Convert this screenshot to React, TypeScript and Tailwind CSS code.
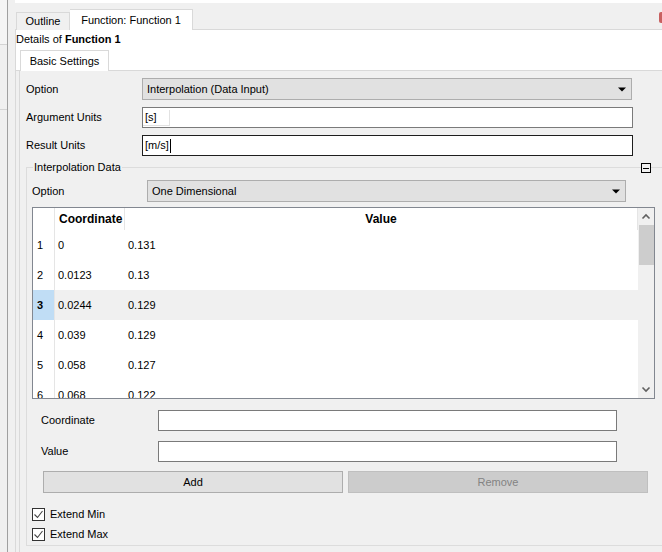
import React from "react";

const rows = [
  ["1", "0", "0.131"],
  ["2", "0.0123", "0.13"],
  ["3", "0.0244", "0.129"],
  ["4", "0.039", "0.129"],
  ["5", "0.058", "0.127"],
  ["6", "0.068", "0.122"],
];

function Caret() {
  return (
    <svg width="8" height="5" viewBox="0 0 8 5" className="shrink-0">
      <path d="M0 0.5h8L4 4.5z" fill="#000" />
    </svg>
  );
}

function Select({ value, className }: { value: string; className: string }) {
  return (
    <div
      className={`flex h-[22px] items-center justify-between border border-[#adadad] bg-[#e1e1e1] pl-[4px] pr-[5px] ${className}`}
    >
      <span>{value}</span>
      <Caret />
    </div>
  );
}

function Check({ label }: { label: string }) {
  return (
    <div className="flex h-[20px] items-center">
      <span className="flex h-[13px] w-[13px] items-center justify-center border border-[#333] bg-white">
        <svg width="11" height="11" viewBox="0 0 11 11">
          <path d="M1.5 5.5l3 3 5-6.5" fill="none" stroke="#444" strokeWidth="1.1" />
        </svg>
      </span>
      <span className="ml-[5px]">{label}</span>
    </div>
  );
}

export default function App() {
  return (
    <div
      className="relative flex h-[552px] w-[662px] overflow-hidden bg-[#f0f0f0] text-[11px] text-black"
      style={{ fontFamily: "'Liberation Sans', Arial, sans-serif" }}
    >
      {/* left docked strip */}
      <div className="flex w-[7px] flex-col">
        <div className="h-[45px] border-b border-[#d4d4d4] bg-[#f5f5f5]" />
        <div className="h-[65px] border-b border-[#d4d4d4]" />
      </div>
      <div className="w-px bg-[#a0a0a0]" />
      <div className="w-[7px]" />

      {/* main area */}
      <div className="flex min-w-0 flex-1 flex-col">
        <div className="h-[3px] bg-white" />

        {/* top tabs */}
        <div className="flex h-[27px] items-end border-b border-[#d9d9d9]">
          <div className="mb-[-1px] ml-px flex h-[18px] w-[54px] items-center justify-center border border-b-0 border-[#d9d9d9] bg-[#f0f0f0]">
            Outline
          </div>
          <div className="mb-[-1px] flex h-[21px] w-[123px] items-center justify-center border border-b-0 border-l-0 border-[#d9d9d9] bg-white">
            Function: Function 1
          </div>
          <div className="mb-[6px] ml-auto mr-[-8px] h-[11px] w-[11px] rounded-[2px] bg-[#c86060]" />
        </div>

        {/* details header */}
        <div className="flex h-[41px] flex-col border-l border-[#d9d9d9] bg-white">
          <div className="h-[16px] pt-[2px] leading-[14px]">
            Details of <b>Function 1</b>
          </div>
          <div className="mt-auto flex items-end border-b border-[#d9d9d9]">
            <div className="mb-[-1px] ml-[4px] flex h-[21px] w-[89px] items-center justify-center border border-b-0 border-[#d9d9d9] bg-white">
              Basic Settings
            </div>
          </div>
        </div>

        {/* settings pane */}
        <div className="flex flex-1 border-l border-[#d9d9d9]">
          <div className="w-[4px]" />
          <div className="flex flex-1 flex-col border-l border-[#d9d9d9] pt-[7px]">
            <div className="flex h-[22px] items-center">
              <span className="w-[122px] pl-[6px]">Option</span>
              <Select value="Interpolation (Data Input)" className="w-[490px]" />
            </div>
            <div className="mt-[7px] flex h-[21px] items-center">
              <span className="w-[122px] pl-[6px]">Argument Units</span>
              <div className="flex h-[21px] w-[491px] items-center border border-[#7a7a7a] bg-white">
                <span className="flex h-[16px] w-[27px] items-center border-b border-r border-[#e2e2e2] pl-[2px]">[s]</span>
              </div>
            </div>
            <div className="mt-[7px] flex h-[21px] items-center">
              <span className="w-[122px] pl-[6px]">Result Units</span>
              <div className="flex h-[21px] w-[491px] items-center border border-[#1e1e1e] bg-white pl-[2px]">
                <span>[m/s]</span>
                <span className="ml-px h-[14px] w-px bg-black" />
              </div>
            </div>

            {/* Interpolation data group */}
            <div className="relative ml-[6px] mt-[11px] flex w-[636px] flex-col border-l border-t border-[#dcdcdc] pb-[1px] pl-[5px]">
              <span className="absolute left-[6px] top-[-8px] bg-[#f0f0f0] px-[1px] leading-[14px]">
                Interpolation Data
              </span>
              <span className="absolute left-[614px] top-[-5px] flex h-[10px] w-[10px] items-center justify-center border border-black bg-[#f0f0f0]">
                <span className="h-px w-[6px] bg-black" />
              </span>

              <div className="mt-[12px] flex h-[22px] items-center">
                <span className="w-[115px]">Option</span>
                <Select value="One Dimensional" className="w-[479px]" />
              </div>

              {/* data table */}
              <div className="mt-[5px] flex h-[192px] w-[623px] border border-[#828790] bg-white">
                <div className="flex flex-1 flex-col overflow-hidden">
                  <div className="flex h-[22px] shrink-0 text-[12px] font-bold">
                    <div className="w-[22px] border-r border-[#e5e5e5]" />
                    <div className="flex w-[70px] items-center border-r border-[#e5e5e5] pl-[4px]">Coordinate</div>
                    <div className="flex flex-1 items-center justify-center border-r border-[#e5e5e5]">Value</div>
                  </div>
                  {rows.map(([n, c, v]) => {
                    const sel = n === "3";
                    return (
                      <div key={n} className={`flex h-[30px] shrink-0 ${sel ? "bg-[#f0f0f0]" : ""}`}>
                        <div
                          className={`flex w-[22px] items-center border-r border-[#e5e5e5] pl-[4px] ${sel ? "bg-[#c0ddf5] font-bold" : "bg-white"}`}
                        >
                          {n}
                        </div>
                        <div className="flex w-[70px] items-center pl-[3px]">{c}</div>
                        <div className="flex flex-1 items-center pl-[3px]">{v}</div>
                      </div>
                    );
                  })}
                </div>
                <div className="flex w-[16px] flex-col items-center bg-[#f0f0f0]">
                  <svg width="10" height="17" viewBox="0 0 10 17" className="shrink-0">
                    <path d="M1.5 10.5L5 7l3.5 3.5" fill="none" stroke="#606060" strokeWidth="1.6" />
                  </svg>
                  <div className="h-[40px] w-[15px] bg-[#cdcdcd]" />
                  <div className="flex-1" />
                  <svg width="10" height="17" viewBox="0 0 10 17" className="shrink-0">
                    <path d="M1.5 6.5L5 10l3.5-3.5" fill="none" stroke="#606060" strokeWidth="1.6" />
                  </svg>
                </div>
              </div>

              <div className="mt-[11px] flex h-[21px] items-center">
                <span className="w-[126px] pl-[9px]">Coordinate</span>
                <div className="h-[21px] w-[459px] border border-[#7a7a7a] bg-white" />
              </div>
              <div className="mt-[10px] flex h-[21px] items-center">
                <span className="w-[126px] pl-[9px]">Value</span>
                <div className="h-[21px] w-[459px] border border-[#7a7a7a] bg-white" />
              </div>

              <div className="mt-[9px] flex gap-[5px] pl-[11px]">
                <div className="flex h-[22px] w-[300px] items-center justify-center border border-[#adadad] bg-[#e1e1e1]">
                  Add
                </div>
                <div className="flex h-[22px] w-[300px] items-center justify-center border border-[#bfbfbf] bg-[#cccccc] text-[#838383]">
                  Remove
                </div>
              </div>

              <div className="mt-[11px] flex flex-col">
                <Check label="Extend Min" />
                <Check label="Extend Max" />
              </div>
              <div className="absolute bottom-[-1px] left-[-1px] h-px w-[640px] bg-[#dcdcdc]" />
            </div>
          </div>
        </div>
      </div>
    </div>
  );
}
